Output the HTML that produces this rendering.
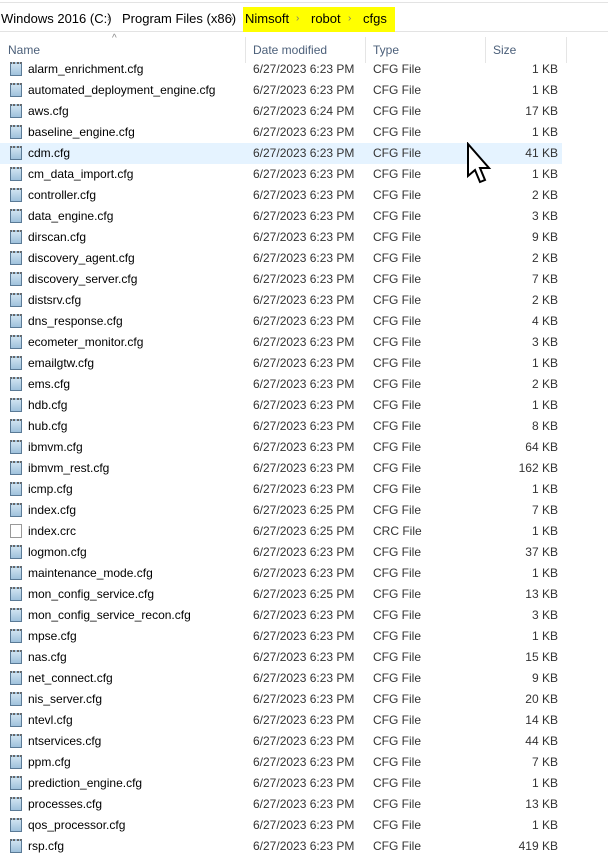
<!DOCTYPE html>
<html><head><meta charset="utf-8"><style>
body{margin:0;width:608px;height:844px;overflow:hidden;background:#fff;font-family:"Liberation Sans",sans-serif;font-size:12px;color:#000;position:relative}
.l{position:absolute;left:0;width:608px;height:1px;background:#e3e3e3}
.bc{position:absolute;top:8px;left:0;height:23px;line-height:22px;white-space:nowrap;font-size:13px}
.bc span{position:absolute;top:0}
.hl{position:absolute;left:243px;top:7px;width:152px;height:25px;background:#ffff00}
.ar{color:#777;font-size:10px}
.hd{position:absolute;top:40px;height:20px;line-height:21px;color:#4c607a}
.sep{position:absolute;top:37px;width:1px;height:26px;background:#e5e5e5}
.r{position:absolute;left:0;width:608px;height:21px;line-height:21px}
.selbg{position:absolute;left:0;width:562px;height:21px;background:#e5f3ff}
.r span{position:absolute;top:0;white-space:nowrap}
.n{left:28px}.d{left:253px;color:#333}.t{left:373px;color:#333}.s{right:50px;color:#333}
.ic{position:absolute;left:10px;top:3px;width:12px;height:14px;border:1px solid #5a7a96;background:linear-gradient(#cfe2f0,#9fc1dc);box-sizing:border-box;border-top:2px dotted #666}
.ic.w{background:#fff;border:1px solid #999}
</style></head><body>
<div class="l" style="top:2px"></div>
<div class="l" style="top:31px"></div>
<div class="hl"></div>
<div class="bc">
<span style="left:1px">Windows 2016 (C:)</span><span class="ar" style="left:107px">›</span>
<span style="left:122px">Program Files (x86)</span><span class="ar" style="left:230px">›</span>
<span style="left:245px">Nimsoft</span><span class="ar" style="left:296px">›</span>
<span style="left:311px">robot</span><span class="ar" style="left:348px">›</span>
<span style="left:363px">cfgs</span>
</div>
<div style="position:absolute;left:112px;top:33px;color:#888;font-size:10px">^</div>
<div class="hd" style="left:8px">Name</div>
<div class="hd" style="left:253px">Date modified</div>
<div class="hd" style="left:373px">Type</div>
<div class="hd" style="left:493px">Size</div>
<div class="sep" style="left:245px"></div><div class="sep" style="left:365px"></div><div class="sep" style="left:485px"></div><div class="sep" style="left:566px"></div>
<div id="rows"></div>
<svg style="position:absolute;left:466px;top:142px" width="30" height="44" viewBox="0 0 30 44"><path d="M2 2 L2 34 L9 28 L14 40 L19 38 L14 26 L23 26 Z" fill="#fff" stroke="#000" stroke-width="2" stroke-linejoin="miter"/></svg>
<script>
var f=[["alarm_enrichment.cfg","6:23","1"],["automated_deployment_engine.cfg","6:23","1"],["aws.cfg","6:24","17"],["baseline_engine.cfg","6:23","1"],["cdm.cfg","6:23","41"],["cm_data_import.cfg","6:23","1"],["controller.cfg","6:23","2"],["data_engine.cfg","6:23","3"],["dirscan.cfg","6:23","9"],["discovery_agent.cfg","6:23","2"],["discovery_server.cfg","6:23","7"],["distsrv.cfg","6:23","2"],["dns_response.cfg","6:23","4"],["ecometer_monitor.cfg","6:23","3"],["emailgtw.cfg","6:23","1"],["ems.cfg","6:23","2"],["hdb.cfg","6:23","1"],["hub.cfg","6:23","8"],["ibmvm.cfg","6:23","64"],["ibmvm_rest.cfg","6:23","162"],["icmp.cfg","6:23","1"],["index.cfg","6:25","7"],["index.crc","6:25","1","CRC File"],["logmon.cfg","6:23","37"],["maintenance_mode.cfg","6:23","1"],["mon_config_service.cfg","6:25","13"],["mon_config_service_recon.cfg","6:23","3"],["mpse.cfg","6:23","1"],["nas.cfg","6:23","15"],["net_connect.cfg","6:23","9"],["nis_server.cfg","6:23","20"],["ntevl.cfg","6:23","14"],["ntservices.cfg","6:23","44"],["ppm.cfg","6:23","7"],["prediction_engine.cfg","6:23","1"],["processes.cfg","6:23","13"],["qos_processor.cfg","6:23","1"],["rsp.cfg","6:23","419"]];
var h="";f.forEach(function(x,i){h+='<div class="r" style="top:'+(59+21*i)+'px">'+(i==4?'<div class="selbg"></div>':'')+'<div class="ic'+(x[3]?' w':'')+'"></div><span class="n">'+x[0]+'</span><span class="d">6/27/2023 '+x[1]+' PM</span><span class="t">'+(x[3]||'CFG File')+'</span><span class="s">'+x[2]+' KB</span></div>';});
document.getElementById("rows").innerHTML=h;
</script>
</body></html>
